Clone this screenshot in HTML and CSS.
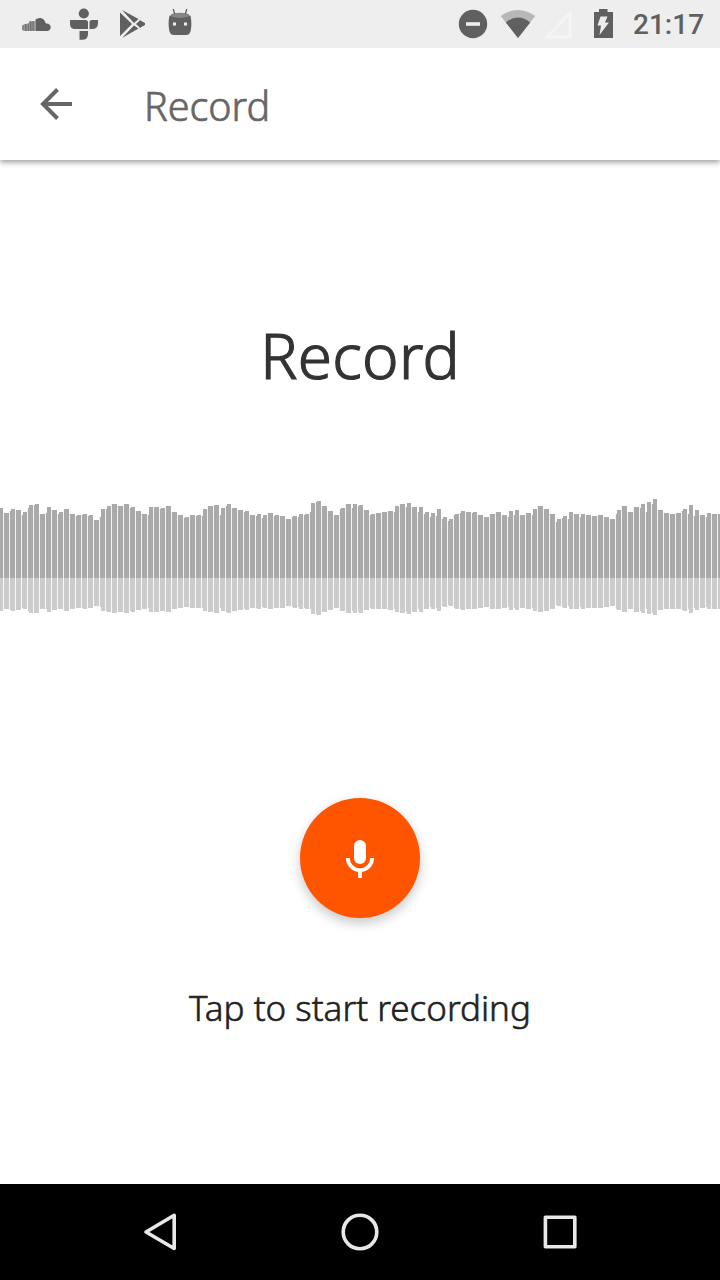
FILE: index.html
```html
<!DOCTYPE html>
<html lang="en">
<head>
<meta charset="utf-8">
<title>Record</title>
<link rel="stylesheet" href="styles.css">
</head>
<body>
<div class="screen">
  <header class="status">
    <svg class="status-icons" width="220" height="48" viewBox="0 0 220 48" fill="#606060">
      <path d="M35.500 31V19.500Q37.400 18 39.500 18C43 18 45.400 20.500 45.700 23.600C48.500 22.800 50.700 24.800 50.700 27.200C50.700 29.500 49 31 47 31Z"/>
      <path d="M22 27.500Q22 24.500 25 24L28.500 23.500L29 21.500L36 21V31H25Q22 31 22 27.500Z" fill="#999"/>
      <path d="M22.500 25.200h1v5h-1zM25 24h1.500v7H25zM28 23.500h1v7.500h-1zM30 21.200h1.400V31H30zM32.500 21h1.200v10h-1.200z" fill="#707070"/>
      <circle cx="83.800" cy="13.500" r="5.100"/>
      <path d="M70 20h15.500q2.500 0 2.500 2.500V29H75q-5 0-5-5zM92 20h6v3q0 6-6 6h-2.500v-6.500q0-2.500 2.500-2.500zM79.500 31H88v3q0 5.700-5 5.700h-3.500z"/>
      <path d="M120 12.500L132 24L120 36ZM122 10L138.500 19L134 23ZM140 20.300L145 23V25L140 27.700L136 24ZM122 38L134 25.500L138.500 28.500Z"/>
      <path d="M169.500 15.500Q180 18.800 190.500 15.500Q192.200 24 190.500 31.500Q189.700 34.800 186 35H174Q170.300 34.800 169.500 31.500Q167.700 24 169.500 15.500Z"/>
      <ellipse cx="180" cy="15.200" rx="9.500" ry="2.500" fill="#858585"/>
      <path d="M173.300 9l1.300 5M186.700 9l-1.300 5" stroke="#606060" stroke-width="1.300"/>
      <path d="M173 22.500h3v3h-3zM184 22.500h3v3h-3z" fill="#eee"/>
    </svg>
    <div class="status-right">
      <svg width="170" height="48" viewBox="452 0 170 48" fill="#606060">
        <circle cx="473" cy="24" r="14.200"/><path d="M466 22.200h14v3.600h-14z" fill="#eee"/>
        <path d="M500.700 16Q518 3.800 535.300 16L518 38Z" fill="#b7b7b7"/>
        <path d="M505.800 22.400Q518 12.500 530.200 22.400L518 38Z"/>
        <path d="M547 37L570 13V37Z" fill="none" stroke="#f5f5f5" stroke-width="2.600"/>
        <path d="M594 12h5V9h8.500v3h5.500v26h-19z"/>
        <path d="M600.500 16.500h7L605 22.500h4L599.500 35l1.500-9.500h-3.500z" fill="#eee"/>
      </svg>
      <span class="clock">21:17</span>
    </div>
  </header>
  <nav class="toolbar">
    <svg width="40" height="40" viewBox="36 84 40 40" fill="none" stroke="#666" stroke-width="4"><path d="M72 104H43M57.500 89.500L43 104L57.500 118.500"/></svg>
    <span class="toolbar-title">Record</span>
  </nav>
  <main class="content">
    <h1 class="heading">Record</h1>
    <svg class="wave" id="wave" width="720" height="120" viewBox="0 0 720 120" shape-rendering="crispEdges"></svg>
    <button class="record" aria-label="Record">
      <svg width="120" height="120" viewBox="300 798 120 120"><rect x="354" y="840" width="12" height="24" rx="6" fill="#fff"/><path d="M347.800 858a12.200 12.200 0 0 0 24.400 0M360 870v8" fill="none" stroke="#fff" stroke-width="3.800"/></svg>
    </button>
    <p class="hint">Tap to start recording</p>
  </main>
  <footer class="navbar">
    <svg width="720" height="96" viewBox="0 1184 720 96" fill="none" stroke="#e8e8e8" stroke-width="3.600" stroke-linejoin="round"><path d="M146 1232L174.200 1215.300V1248.500Z"/><circle cx="360" cy="1232" r="16.800"/><rect x="545.400" y="1217.300" width="29.400" height="29.400"/></svg>
  </footer>
</div>
<script src="wave.js"></script>
</body>
</html>
```
FILE: styles.css
```css
* { box-sizing: border-box; }
body { margin: 0; background: #fff; font-family: "Noto Sans", "Open Sans", sans-serif; }
.screen { width: 720px; height: 1280px; display: flex; flex-direction: column; overflow: hidden; }
.status { height: 48px; background: #eee; display: flex; justify-content: space-between; position: relative; z-index: 1; }
.status svg { display: block; }
.status-right { display: flex; width: 268px; }
.clock { font: 500 28px/50px Roboto, sans-serif; color: #606060; margin-left: 11px; }
.toolbar { height: 112px; display: flex; align-items: center; padding-left: 36px; box-shadow: 0 2px 6px rgba(0,0,0,.42); }
.toolbar-title { color: #666; font-size: 39.500px; font-weight: 300; line-height: 56px; margin: 3px 0 0 68px; -webkit-text-stroke: .7px #666; }
.content { flex: 1; display: flex; flex-direction: column; align-items: center; }
.heading { color: #333; font-size: 62px; font-weight: 300; line-height: 80px; margin: 155px 0 0; letter-spacing: .3px; -webkit-text-stroke: 1.200px #333; }
.wave { display: block; margin-top: 100px; }
.record { width: 120px; height: 120px; padding: 0; border: 0; border-radius: 50%; background: #f50; margin-top: 183px; box-shadow: 0 5px 12px rgba(0,0,0,.22); }
.record svg { display: block; }
.hint { color: #222; font-size: 35px; line-height: 48px; font-weight: 300; margin: 66px 0 0; -webkit-text-stroke: .6px #222; }
.navbar { height: 96px; background: #000; }
.navbar svg { display: block; }
```
FILE: wave.js
```js
// Each entry is a bar's top offset in thirds of a pixel; "/" adds its lower left edge.
const samples = `54 69 57/63 60 66/75 45/54 42/45 72 51/69 60 66/72 57 72 75/78 72/75 75/78 90 57/81 48/57 42 48 42 51/54 63 72 51/75 51 54/57 48 66 75
81/84 75 75/78 57/78 48 45 54/75 42/48 54 60 63/66 75 72/78 75/84 69 75/78 78 87 78/81 72/81 72/75 39/66 33/36 48 63 75 54/57 42 42/54 45/48
60 72/75 69 66 63 48/66 42 39/51 51 51/66 66/72 69/81 57/78 81/87 87/93 72/75 63/69 66 66/69 75 81 72 66 75 63/81 60/75 75 69 57/75 48
57 72 87/96 78/84 66/87 72 72/81 75 78 75 81 87 60/72 48 66 51 42/54 36/66 27/42 60 69 72 69 57/63 45/72 60/78 75 69/81 72 72`.split(/\s+/);
const base = 83;
let upper = "", lower = "", gapUpper = "", gapLower = "";
function column(x, w, h) {
  upper += `M${x} ${base}v${-h}h${w}v${h}z`;
  lower += `M${x} ${base}v${Math.round(h * 0.477)}h${w}V${base}z`;
}
samples.forEach((sample, i) => {
  const [top, edge] = sample.split("/").map(Number);
  const h = (264 - top) / 3, x = i * 6 - 2;
  const edgeHeight = edge ? (264 - edge) / 3 : h;
  column(x, 1, edgeHeight);
  column(x + 1, 4, h);
  gapUpper += `M${x - 1} ${base}v${-edgeHeight}h1v${edgeHeight}z`;
  gapLower += `M${x - 1} ${base}v${Math.round(edgeHeight * 0.477)}h1V${base}z`;
});
document.getElementById("wave").innerHTML =
  `<path d="${upper}" fill="#aaa"/><path d="${lower}" fill="#ccc"/><path d="${gapUpper}" fill="#f2f2f2"/><path d="${gapLower}" fill="#f8f8f8"/>`;
```
